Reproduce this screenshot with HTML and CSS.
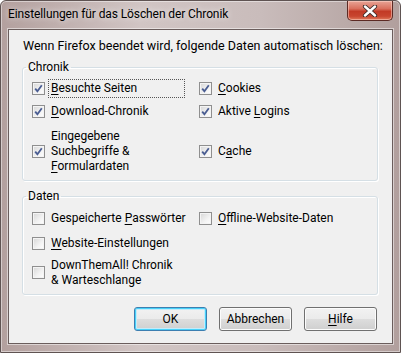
FILE: index.html
```html
<!DOCTYPE html>
<html lang="de">
<head>
<meta charset="utf-8">
<link rel="stylesheet" href="styles.css">
</head>
<body>
<div class="window">
  <div class="titlebar">
    <span class="title">Einstellungen für das Löschen der Chronik</span>
    <span class="close"><svg width="16" height="12" viewBox="0 0 16 12"><path d="M3 1.5 L13 10.5 M13 1.5 L3 10.5" stroke="#3a2a28" stroke-width="4.2" stroke-linecap="round"/><path d="M3 1.5 L13 10.5 M13 1.5 L3 10.5" stroke="#fff" stroke-width="2.4" stroke-linecap="round"/></svg></span>
  </div>
  <div class="client">
    <p class="intro">Wenn Firefox beendet wird, folgende Daten automatisch löschen:</p>
    <fieldset class="group chronik">
      <legend>Chronik</legend>
      <div class="item"><span class="cb on"></span><span class="lbl focus"><u>B</u>esuchte Seiten</span></div>
      <div class="item"><span class="cb on"></span><span class="lbl"><u>C</u>ookies</span></div>
      <div class="item"><span class="cb on"></span><span class="lbl"><u>D</u>ownload-Chronik</span></div>
      <div class="item"><span class="cb on"></span><span class="lbl">Aktive <u>L</u>ogins</span></div>
      <div class="item"><span class="cb on"></span><span class="lbl">Eingegebene<br>Suchbegriffe &amp;<br><u>F</u>ormulardaten</span></div>
      <div class="item"><span class="cb on"></span><span class="lbl">C<u>a</u>che</span></div>
    </fieldset>
    <fieldset class="group daten">
      <legend>Daten</legend>
      <div class="item"><span class="cb"></span><span class="lbl">Gespeicherte <u>P</u>asswörter</span></div>
      <div class="item"><span class="cb"></span><span class="lbl"><u>O</u>ffline-Website-Daten</span></div>
      <div class="item"><span class="cb"></span><span class="lbl"><u>W</u>ebsite-Einstellungen</span></div>
      <div class="item empty"></div>
      <div class="item"><span class="cb"></span><span class="lbl">DownThemAll! Chronik<br>&amp; Warteschlange</span></div>
      <div class="item empty"></div>
    </fieldset>
    <div class="buttons">
      <button class="btn default">OK</button>
      <button class="btn">Abbrechen</button>
      <button class="btn"><u>H</u>ilfe</button>
    </div>
  </div>
</div>
</body>
</html>
```
FILE: styles.css
```css
html, body {
  margin: 0;
  padding: 0;
}
body {
  width: 401px;
  height: 353px;
  overflow: hidden;
  font-family: Roboto, "Noto Sans", sans-serif;
  font-size: 12px;
  color: #000;
}
.window {
  box-sizing: border-box;
  width: 401px;
  height: 353px;
  padding: 0 7px 8px 7px;
  border: 1px solid #5f5352;
  border-radius: 6px 6px 0 0;
  background: linear-gradient(90deg, #b3a09e 0%, #d1c5c4 35%, #c9bcbb 65%, #b19f9d 100%);
  box-shadow: inset 0 0 0 1px rgba(255,255,255,0.45);
  display: flex;
  flex-direction: column;
}
.titlebar {
  height: 28px;
  display: flex;
  align-items: flex-start;
  justify-content: space-between;
  flex-shrink: 0;
}
.title {
  margin-top: 6px;
  font-size: 12px;
  letter-spacing: -0.1px;
  color: #000;
  text-shadow: 0 0 6px rgba(255,255,255,0.9);
}
.close {
  width: 46px;
  height: 20px;
  margin-right: 0;
  box-sizing: border-box;
  border: 1px solid #5c2a24;
  border-top: none;
  border-radius: 0 0 5px 5px;
  background: linear-gradient(180deg, #e8a496 0%, #d9705e 40%, #c23a26 55%, #c8452f 80%, #e07a5c 100%);
  box-shadow: inset 0 0 0 1px rgba(255,220,210,0.5);
  display: flex;
  align-items: center;
  justify-content: center;
}
.close svg { display: block; }
.client {
  flex: 1;
  background: #f0f0f0;
  border: 1px solid #6a5d5c;
  box-shadow: 0 0 0 1px rgba(255,255,255,0.5);
  display: flex;
  flex-direction: column;
  padding: 0;
}
.intro {
  margin: 0;
  padding: 8px 0 0 14px;
  line-height: 15px;
  font-size: 12.5px;
}
.group {
  margin: 7px 14px 0 13px;
  padding: 2px 0 0 9px;
  border: 1px solid #d5dfe5;
  border-radius: 3px;
  box-shadow: inset 1px 1px 0 #fff, 1px 1px 0 #fff;
  display: grid;
  grid-template-columns: 167px 1fr;
  min-width: 0;
}
.group legend {
  padding: 0 2px;
  margin-left: -6px;
  line-height: 15px;
}
.chronik {
  grid-template-rows: 23px 23px 56px;
  padding-bottom: 1px;
}
.daten {
  margin-top: 8px;
  grid-template-rows: 25px 24px 35px;
  padding-bottom: 4px;
}
.item {
  display: flex;
  align-items: center;
  gap: 3px;
  line-height: 15px;
}
.cb {
  box-sizing: border-box;
  width: 13px;
  height: 13px;
  flex-shrink: 0;
  border: 1px solid #8f8f8f;
  box-shadow: inset 0 0 0 1px #f4f4f4;
  background: linear-gradient(135deg, #d6d6d6 0%, #f3f3f3 60%, #ffffff 100%);
  position: relative;
}
.cb.on::after {
  content: "";
  position: absolute;
  left: 1px;
  top: 1px;
  width: 9px;
  height: 9px;
  background: url("data:image/svg+xml;utf8,<svg xmlns='http://www.w3.org/2000/svg' width='9' height='9' viewBox='0 0 9 9'><path d='M1.2 4.6 L3.4 7.2 L7.8 1.2' fill='none' stroke='%234a5d92' stroke-width='1.8'/></svg>") no-repeat;
}
.lbl {
  padding: 1px 2px;
  border: 1px dotted transparent;
}
.lbl.focus {
  border-color: #555;
  width: 131px;
}
u { text-decoration: underline; text-underline-offset: 2px; }
.buttons {
  margin-top: 12px;
  padding-right: 15px;
  display: flex;
  justify-content: flex-end;
  gap: 12px;
}
.btn {
  box-sizing: border-box;
  width: 73px;
  height: 24px;
  font-family: inherit;
  font-size: 12px;
  color: #000;
  border: 1px solid #707070;
  border-radius: 3px;
  background: linear-gradient(180deg, #f2f2f2 0%, #ebebeb 50%, #dddddd 51%, #cfcfcf 100%);
  box-shadow: inset 0 0 0 1px #fcfcfc;
  padding: 0;
}
.btn.default {
  border-color: #3c7fb1;
  box-shadow: inset 0 0 0 1px #48d1f9, inset 0 0 0 2px #c3ecfb;
}
```
